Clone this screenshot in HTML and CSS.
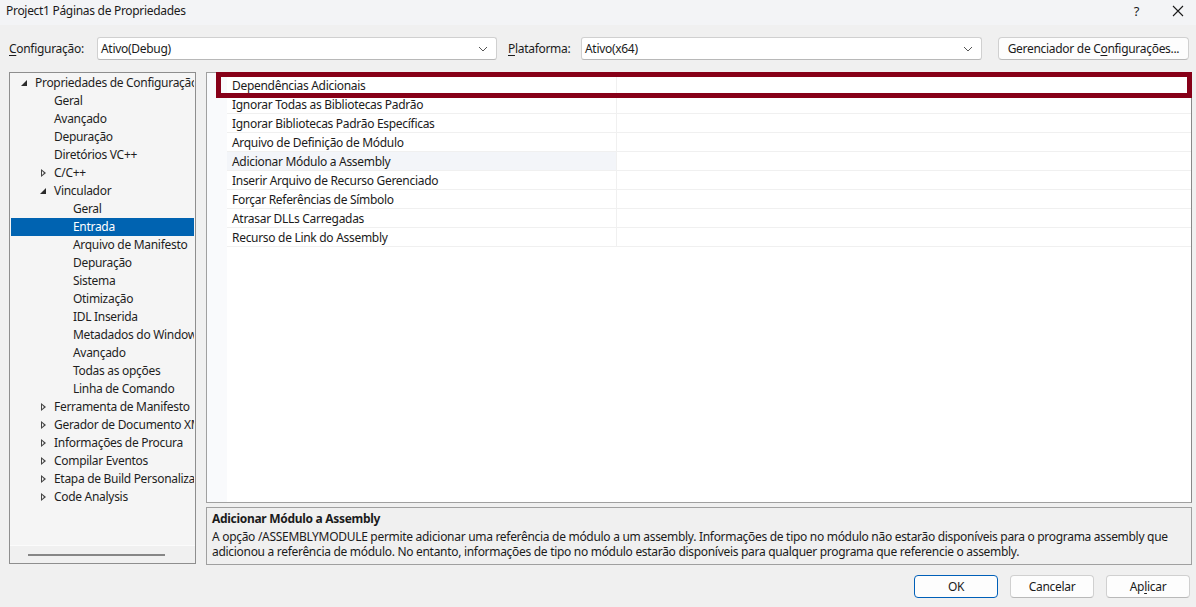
FILE: index.html
```html
<!DOCTYPE html>
<html lang="pt">
<head>
<meta charset="utf-8">
<title>Project1 Páginas de Propriedades</title>
<link rel="stylesheet" href="styles.css">
</head>
<body>
<div class="dialog">
  <div class="titlebar">
    <span class="title">Project1 Páginas de Propriedades</span>
    <div class="title-btns">
      <span class="help">?</span>
      <svg class="close" width="12" height="12" viewBox="0 0 12 12"><path d="M1 1 L11 11 M11 1 L1 11" stroke="#1a1a1a" stroke-width="1.1" fill="none"/></svg>
    </div>
  </div>

  <div class="toolbar">
    <span class="lbl lbl-config"><u>C</u>onfiguração:</span>
    <div class="combo combo-config"><span>Ativo(Debug)</span><svg class="chev" width="10" height="6" viewBox="0 0 10 6"><path d="M1 1 L5 5 L9 1" stroke="#555" stroke-width="1" fill="none"/></svg></div>
    <span class="lbl lbl-plat"><u>P</u>lataforma:</span>
    <div class="combo combo-plat"><span>Ativo(x64)</span><svg class="chev" width="10" height="6" viewBox="0 0 10 6"><path d="M1 1 L5 5 L9 1" stroke="#555" stroke-width="1" fill="none"/></svg></div>
    <button class="btn btn-manager">Gerenciador de C<u>o</u>nfigurações...</button>
  </div>

  <div class="main">
    <div class="tree">
      <div class="tree-rows">
        <div class="node l0"><span class="arr exp"></span>Propriedades de Configuração</div>
        <div class="node l1"><span class="arr"></span>Geral</div>
        <div class="node l1"><span class="arr"></span>Avançado</div>
        <div class="node l1"><span class="arr"></span>Depuração</div>
        <div class="node l1"><span class="arr"></span>Diretórios VC++</div>
        <div class="node l1"><span class="arr col"></span>C/C++</div>
        <div class="node l1"><span class="arr exp"></span>Vinculador</div>
        <div class="node l2"><span class="arr"></span>Geral</div>
        <div class="node l2 sel"><span class="arr"></span>Entrada</div>
        <div class="node l2"><span class="arr"></span>Arquivo de Manifesto</div>
        <div class="node l2"><span class="arr"></span>Depuração</div>
        <div class="node l2"><span class="arr"></span>Sistema</div>
        <div class="node l2"><span class="arr"></span>Otimização</div>
        <div class="node l2"><span class="arr"></span>IDL Inserida</div>
        <div class="node l2"><span class="arr"></span>Metadados do Windows</div>
        <div class="node l2"><span class="arr"></span>Avançado</div>
        <div class="node l2"><span class="arr"></span>Todas as opções</div>
        <div class="node l2"><span class="arr"></span>Linha de Comando</div>
        <div class="node l1"><span class="arr col"></span>Ferramenta de Manifesto</div>
        <div class="node l1"><span class="arr col"></span>Gerador de Documento XML</div>
        <div class="node l1"><span class="arr col"></span>Informações de Procura</div>
        <div class="node l1"><span class="arr col"></span>Compilar Eventos</div>
        <div class="node l1"><span class="arr col"></span>Etapa de Build Personalizada</div>
        <div class="node l1"><span class="arr col"></span>Code Analysis</div>
      </div>
      <div class="hscroll"><div class="thumb"></div></div>
    </div>

    <div class="right">
      <div class="grid">
        <div class="row"><div class="name">Dependências Adicionais</div><div class="val"></div></div>
        <div class="row"><div class="name">Ignorar Todas as Bibliotecas Padrão</div><div class="val"></div></div>
        <div class="row"><div class="name">Ignorar Bibliotecas Padrão Específicas</div><div class="val"></div></div>
        <div class="row"><div class="name">Arquivo de Definição de Módulo</div><div class="val"></div></div>
        <div class="row hl"><div class="name">Adicionar Módulo a Assembly</div><div class="val"></div></div>
        <div class="row"><div class="name">Inserir Arquivo de Recurso Gerenciado</div><div class="val"></div></div>
        <div class="row"><div class="name">Forçar Referências de Símbolo</div><div class="val"></div></div>
        <div class="row"><div class="name">Atrasar DLLs Carregadas</div><div class="val"></div></div>
        <div class="row"><div class="name">Recurso de Link do Assembly</div><div class="val"></div></div>
        <div class="mark"></div>
      </div>
      <div class="desc">
        <div class="desc-title">Adicionar Módulo a Assembly</div>
        <div class="desc-text">A opção /ASSEMBLYMODULE permite adicionar uma referência de módulo a um assembly. Informações de tipo no módulo não estarão disponíveis para o programa assembly que adicionou a referência de módulo. No entanto, informações de tipo no módulo estarão disponíveis para qualquer programa que referencie o assembly.</div>
      </div>
    </div>
  </div>

  <div class="footer">
    <button class="btn btn-foot btn-ok">OK</button>
    <button class="btn btn-foot">Cancelar</button>
    <button class="btn btn-foot">Ap<u>l</u>icar</button>
  </div>
</div>
</body>
</html>
```

FILE: styles.css
```css
* { box-sizing: border-box; }
html, body {
  margin: 0;
  padding: 0;
  width: 1196px;
  height: 607px;
  overflow: hidden;
  background: #f0f0f0;
  font-family: "Noto Sans", "Open Sans", sans-serif;
  font-size: 12px;
  letter-spacing: -0.3px;
  color: #1b1b1b;
}
u { text-decoration: underline; text-underline-offset: 2px; }
.dialog { display: flex; flex-direction: column; height: 607px; }

.titlebar {
  height: 25px;
  background: #f3f4f6;
  display: flex;
  align-items: center;
  justify-content: space-between;
  padding: 0 12px 4px 6px;
}
.title { font-size: 12px; color: #1a1a1a; }
.title-btns { display: flex; align-items: center; gap: 33px; }
.help { font-size: 13px; color: #1a1a1a; }

.toolbar {
  display: flex;
  align-items: center;
  height: 23px;
  margin-top: 12px;
  padding-left: 9px;
}
.lbl { color: #1b1b1b; }
.lbl-config { width: 88px; }
.lbl-plat { width: 73px; margin-left: 11px; }
.combo {
  height: 23px;
  background: #fff;
  border: 1px solid #d0d0d0;
  border-bottom-color: #b8b8b8;
  border-radius: 3px;
  display: flex;
  align-items: center;
  justify-content: space-between;
  padding: 0 8px 0 3px;
}
.combo-config { width: 400px; }
.combo-plat { width: 401px; }
.btn {
  font-family: inherit;
  font-size: 12px;
  letter-spacing: -0.3px;
  color: #1b1b1b;
  background: #fdfdfd;
  border: 1px solid #d0d0d0;
  border-bottom-color: #b9b9b9;
  border-radius: 4px;
  height: 23px;
  padding: 0;
}
.btn-manager { width: 191px; margin-left: 16px; }

.main {
  display: flex;
  gap: 10px;
  margin-top: 12px;
  padding-left: 9px;
}
.tree {
  width: 187px;
  height: 492px;
  border: 1px solid #8e8e8e;
  background: #f5f5f5;
  display: flex;
  flex-direction: column;
  overflow: hidden;
}
.tree-rows { flex: 1; padding: 1px 1px 0 1px; overflow: hidden; }
.node {
  height: 18px;
  line-height: 18px;
  white-space: nowrap;
  overflow: hidden;
  display: flex;
  align-items: center;
  color: #1e1e1e;
}
.node.sel { background: #0063b1; color: #fff; }
.arr { width: 15px; height: 18px; flex: none; position: relative; }
.l0 { padding-left: 9px; }
.l1 { padding-left: 28px; }
.l2 { padding-left: 47px; }
.arr.exp::before {
  content: "";
  position: absolute;
  left: 1px; top: 6px;
  width: 0; height: 0;
  border-left: 6px solid transparent;
  border-bottom: 6px solid #2b2b2b;
}
.arr.col::before {
  content: "";
  position: absolute;
  left: 2px; top: 5px;
  width: 0; height: 0;
  border-top: 4px solid transparent;
  border-bottom: 4px solid transparent;
  border-left: 5px solid #444;
}
.arr.col::after {
  content: "";
  position: absolute;
  left: 3px; top: 7px;
  width: 0; height: 0;
  border-top: 2px solid transparent;
  border-bottom: 2px solid transparent;
  border-left: 2.5px solid #f5f5f5;
}
.hscroll {
  height: 18px;
  background: #f0f0f0;
  border-top: 1px solid #fbfbfb;
  display: flex;
  align-items: center;
  padding-left: 18px;
}
.thumb { width: 137px; height: 2px; background: #868686; }

.right { display: flex; flex-direction: column; gap: 4px; width: 986px; }
.grid {
  position: relative;
  height: 431px;
  background: #fff;
  border: 1px solid #a0a0a0;
  border-right-color: #888;
  padding-top: 3px;
}
.row {
  display: flex;
  height: 19px;
  margin-left: 20px;
}
.name {
  width: 390px;
  padding-left: 5px;
  line-height: 19px;
  border-bottom: 1px solid #f0f0f0;
  border-right: 1px solid #f0f0f0;
  color: #1b1b1b;
  white-space: nowrap;
}
.val { flex: 1; border-bottom: 1px solid #f0f0f0; }
.row.hl .name { background: #f3f5f9; }
.grid::before {
  content: "";
  position: absolute;
  left: 0; top: 0; bottom: 0;
  width: 20px;
  background: #f9fafc;
}
.mark {
  position: absolute;
  left: 9px;
  top: -1px;
  width: 976px;
  height: 26px;
  border: 5px solid #870018;
}

.desc {
  height: 58px;
  border: 1px solid #a0a0a0;
  background: #f0f0f0;
  padding: 2px 5px 0 5px;
}
.desc-title { font-weight: bold; line-height: 18px; }
.desc-text { line-height: 15px; padding-top: 1px; }

.footer {
  display: flex;
  justify-content: flex-end;
  gap: 12px;
  margin-top: 10px;
  padding-right: 6px;
}
.btn-foot { width: 84px; }
.btn-ok { border: 1px solid #005fb8; }
```
